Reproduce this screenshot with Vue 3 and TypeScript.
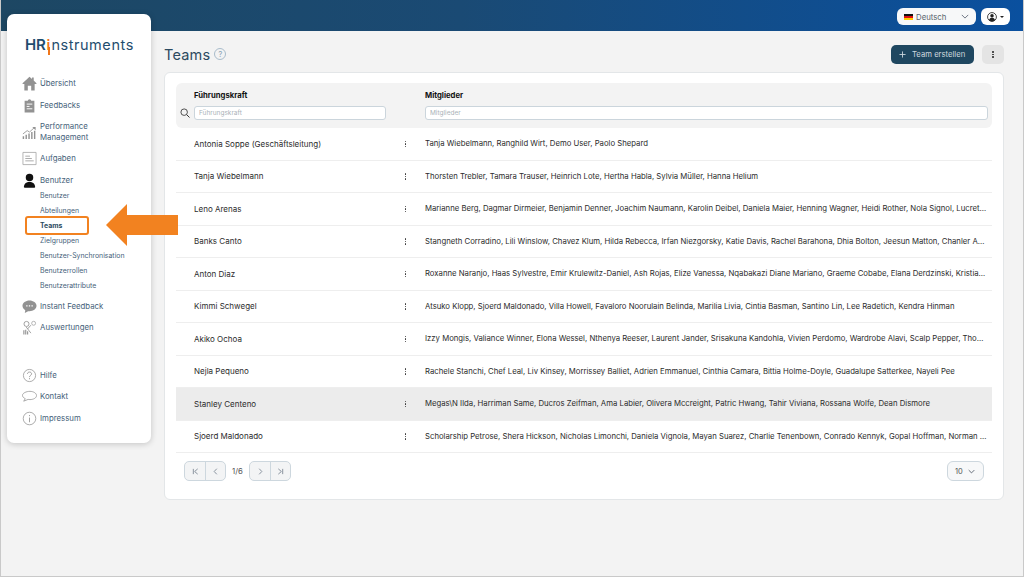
<template>
  <div class="page">
    <header class="topbar">
      <div class="lang">
        <span class="flag"></span>
        <span class="lang-name">Deutsch</span>
        <svg class="chev" viewBox="0 0 10 6" width="8" height="5"><path d="M1 1l4 4 4-4" fill="none" stroke="#6b7280" stroke-width="1.2" /></svg>
      </div>
      <div class="user">
        <svg viewBox="0 0 12 12" width="10" height="10">
          <circle cx="6" cy="6" r="5.3" fill="none" stroke="#222" stroke-width="1" />
          <circle cx="6" cy="4.6" r="2.1" fill="#222" />
          <path d="M2.4 9.6c.6-2 2-2.6 3.6-2.6s3 .6 3.6 2.6C8.6 10.8 7.4 11.3 6 11.3s-2.6-.5-3.6-1.7z" fill="#222" />
        </svg>
        <span class="caret"></span>
      </div>
    </header>

    <div class="body">
      <aside class="sidebar">
        <div class="logo"><b>HR</b><i>i</i><span>nstruments</span></div>
        <nav class="nav">
          <template v-for="item in nav" :key="item.label">
            <div class="nav-item" :class="{ tall: item.label.includes('\n'), gap: item.gap }">
              <svg class="nav-icon" viewBox="0 0 16 16" width="15" height="15">
                <path
                  v-for="(p, i) in icons[item.icon]"
                  :key="i"
                  :d="p.d"
                  :fill="p.fill ?? 'none'"
                  :stroke="p.stroke ?? 'none'"
                  :stroke-width="p.width ?? 1"
                />
              </svg>
              <span class="nav-label">{{ item.label }}</span>
            </div>
            <div v-if="item.children" class="subnav">
              <div v-for="c in item.children" :key="c" class="sub-item" :class="{ active: c === 'Teams' }">{{ c }}</div>
            </div>
          </template>
        </nav>
      </aside>

      <main class="main">
        <div class="title-row">
          <h1>Teams</h1>
          <span class="help">?</span>
          <button class="create">
            <svg class="plus" viewBox="0 0 8 8" width="7" height="7"><path d="M4 .5v7M.5 4h7" stroke="#cfd8df" stroke-width="1" /></svg>
            Team erstellen
          </button>
          <button class="more"><span class="dots"><em></em><em></em><em></em></span></button>
        </div>

        <section class="card">
          <div class="thead">
            <svg class="search" viewBox="0 0 12 12" width="10" height="10">
              <circle cx="5" cy="5" r="3.9" fill="none" stroke="#333" stroke-width="1" />
              <path d="M8 8l3.4 3.4" stroke="#333" stroke-width="1.2" />
            </svg>
            <div class="head-cell name-col">
              <label>Führungskraft</label>
              <input placeholder="Führungskraft" />
            </div>
            <div class="spacer"></div>
            <div class="head-cell">
              <label>Mitglieder</label>
              <input placeholder="Mitglieder" />
            </div>
          </div>

          <div v-for="row in rows" :key="row.name" class="row" :class="{ hover: row.name === 'Stanley Centeno' }">
            <div class="name">{{ row.name }}</div>
            <div class="row-dots"><span class="dots"><em></em><em></em><em></em></span></div>
            <div class="members">{{ row.members }}</div>
          </div>

          <div class="pager">
            <div class="btn-group">
              <button><svg viewBox="0 0 8 8" width="7" height="7"><path d="M1.5 1v6M6.5 1L3 4l3.5 3" fill="none" stroke="#7b8794" stroke-width="1" /></svg></button>
              <button><svg viewBox="0 0 8 8" width="7" height="7"><path d="M5.5 .8L2.500 4l3 3.200" fill="none" stroke="#7b8794" stroke-width="1" /></svg></button>
            </div>
            <span class="page-no">1/6</span>
            <div class="btn-group">
              <button><svg viewBox="0 0 8 8" width="7" height="7"><path d="M2.500 .8L5.500 4l-3 3.200" fill="none" stroke="#7b8794" stroke-width="1" /></svg></button>
              <button><svg viewBox="0 0 8 8" width="7" height="7"><path d="M6.500 1v6M1.500 1L5 4 1.500 7" fill="none" stroke="#7b8794" stroke-width="1" /></svg></button>
            </div>
            <div class="size">
              <span>10</span>
              <svg viewBox="0 0 10 6" width="7" height="5"><path d="M1 1l4 4 4-4" fill="none" stroke="#4b5563" stroke-width="1.2" /></svg>
            </div>
          </div>
        </section>
      </main>
    </div>

    <!-- Markierung über dem Menü -->
    <svg class="arrow" viewBox="0 0 72 42" width="72" height="42"><path d="M0 21L21 0v11h51v20H21v11z" fill="#f28220" /></svg>
  </div>
</template>

<script setup lang="ts">
type Shape = { d: string; fill?: string; stroke?: string; width?: number }
type NavItem = { label: string; icon: string; children?: string[]; gap?: boolean }

const grey = '#929292'

const icons: Record<string, Shape[]> = {
  home: [{ d: 'M8 .8L.6 7.600v.9h1.900V15.500h3.700v-5h3.600v5h3.700V8.500h1.900v-.9L12.500 4.800V1.500h-1.800v1.600z', fill: grey }],
  feedback: [
    { d: 'M2.800 3h3.400a1.800 1.800 0 0 1 3.600 0h3.400v12.500H2.800z', fill: grey },
    { d: 'M5 6.500h6M5 9h3M5 11.500h6', stroke: '#fff', width: 1 },
  ],
  chart: [
    { d: 'M1.500 15v-3M4.500 15v-4.500M7.500 15V9M10.500 15V7.500M13.500 15V6', stroke: grey, width: 1.500 },
    { d: 'M1 9.500L5.500 6l2.500 1.500L13.500 2.500', stroke: grey, width: 0.9 },
    { d: 'M11 2h3.500v3.500z', fill: grey },
  ],
  tasks: [
    { d: 'M1 1.500h14v13H1z', stroke: '#a8a8a8', width: 0.9 },
    { d: 'M3.500 5.500h5M3.500 8h7M3.500 10.500h9', stroke: '#a8a8a8', width: 1 },
  ],
  user: [
    { d: 'M8 .8a4 4 0 1 0 0 8 4 4 0 0 0 0-8z', fill: '#111' },
    { d: 'M2 15c0-3.500 2.500-5.500 6-5.500s6 2 6 5.500c0 .5-.5.800-1 .800H3c-.5 0-1-.3-1-.8z', fill: '#111' },
  ],
  chat: [
    { d: 'M8 1.500c4 0 7.500 2.500 7.500 5.800s-3.500 5.800-7.500 5.800l-1.500-.1L3 15l.5-3C1.600 10.900.5 9.200.5 7.300.5 4 4 1.500 8 1.500z', fill: grey },
    { d: 'M4.500 7.300h1.400M7.300 7.300h1.400M10.100 7.300h1.400', stroke: '#fff', width: 1.400 },
  ],
  report: [
    { d: 'M7.500 4.200a2.700 2.700 0 1 1-5.400 0 2.700 2.700 0 0 1 5.400 0zM4.500 7.500l5 6.500M9.500 5.500L6 9.500', stroke: grey, width: 0.9 },
    { d: 'M14.500 3.500a2.100 2.100 0 1 1-4.200 0 2.100 2.100 0 0 1 4.200 0z', stroke: grey, width: 0.7 },
    { d: 'M2 15.500v-4.500M4 15.500v-5M6 15.500v-3.500', stroke: grey, width: 1.200 },
  ],
  help: [
    { d: 'M8 1.500a6.500 6.500 0 1 0 0 13 6.500 6.500 0 0 0 0-13z', stroke: grey, width: 0.8 },
    { d: 'M5.800 6.300C5.900 5 6.800 4.300 8 4.300c1.300 0 2.200.8 2.200 1.900 0 1.700-2.200 1.700-2.200 3.500M8 10.800v1.200', stroke: grey, width: 0.9 },
  ],
  contact: [{ d: 'M8.500 2.500c3.500 0 7 1.900 7 4.500s-3.500 4.300-7 4.300c-.7 0-1.400-.1-2-.2L1.800 13l1.700-2.700C1.800 9.500.5 8.300.5 6.800c0-2.400 4-4.300 8-4.300z', stroke: grey, width: 0.8 }],
  info: [
    { d: 'M8 1.300a6.700 6.700 0 1 0 0 13.400A6.700 6.700 0 0 0 8 1.300z', stroke: grey, width: 0.8 },
    { d: 'M8 7v5M8 4.300v1.200', stroke: grey, width: 0.9 },
  ],
}

const nav: NavItem[] = [
  { label: 'Übersicht', icon: 'home' },
  { label: 'Feedbacks', icon: 'feedback' },
  { label: 'Performance\nManagement', icon: 'chart' },
  { label: 'Aufgaben', icon: 'tasks' },
  {
    label: 'Benutzer',
    icon: 'user',
    children: ['Benutzer', 'Abteilungen', 'Teams', 'Zielgruppen', 'Benutzer-Synchronisation', 'Benutzerrollen', 'Benutzerattribute'],
  },
  { label: 'Instant Feedback', icon: 'chat' },
  { label: 'Auswertungen', icon: 'report' },
  { label: 'Hilfe', icon: 'help', gap: true },
  { label: 'Kontakt', icon: 'contact' },
  { label: 'Impressum', icon: 'info' },
]

const rows = [
  { name: 'Antonia Soppe (Geschäftsleitung)', members: 'Tanja Wiebelmann, Ranghild Wirt, Demo User, Paolo Shepard' },
  { name: 'Tanja Wiebelmann', members: 'Thorsten Trebler, Tamara Trauser, Heinrich Lote, Hertha Habla, Sylvia Müller, Hanna Helium' },
  { name: 'Leno Arenas', members: 'Marianne Berg, Dagmar Dirmeier, Benjamin Denner, Joachim Naumann, Karolin Deibel, Daniela Maier, Henning Wagner, Heidi Rother, Nola Signol, Lucretia Moss, Anna Wolf' },
  { name: 'Banks Canto', members: 'Stangneth Corradino, Lili Winslow, Chavez Klum, Hilda Rebecca, Irfan Niezgorsky, Katie Davis, Rachel Barahona, Dhia Bolton, Jeesun Matton, Chanler Agius, Mona Lee' },
  { name: 'Anton Diaz', members: 'Roxanne Naranjo, Haas Sylvestre, Emir Krulewitz-Daniel, Ash Rojas, Elize Vanessa, Nqabakazi Diane Mariano, Graeme Cobabe, Elana Derdzinski, Kristian Holt, Noor Sami' },
  { name: 'Kimmi Schwegel', members: 'Atsuko Klopp, Sjoerd Maldonado, Villa Howell, Favaloro Noorulain Belinda, Marilia Livia, Cintia Basman, Santino Lin, Lee Radetich, Kendra Hinman' },
  { name: 'Akiko Ochoa', members: 'Izzy Mongis, Valiance Winner, Elona Wessel, Nthenya Reeser, Laurent Jander, Srisakuna Kandohla, Vivien Perdomo, Wardrobe Alavi, Scalp Pepper, Thomas Reid, Ona Bay' },
  { name: 'Nejla Pequeno', members: 'Rachele Stanchi, Chef Leal, Liv Kinsey, Morrissey Balliet, Adrien Emmanuel, Cinthia Camara, Bittia Holme-Doyle, Guadalupe Satterkee, Nayeli Pee' },
  { name: 'Stanley Centeno', members: 'Megas\\N Ilda, Harriman Same, Ducros Zeifman, Ama Labier, Olivera Mccreight, Patric Hwang, Tahir Viviana, Rossana Wolfe, Dean Dismore' },
  { name: 'Sjoerd Maldonado', members: 'Scholarship Petrose, Shera Hickson, Nicholas Limonchi, Daniela Vignola, Mayan Suarez, Charlie Tenenbown, Conrado Kennyk, Gopal Hoffman, Norman Ulrich, Ali Kent' },
]
</script>

<style>
html,
body {
  margin: 0;
  background: #f3f3f3;
}
</style>

<style scoped>
.page {
  position: relative;
  width: 1024px;
  height: 577px;
  box-sizing: border-box;
  overflow: hidden;
  background: #f3f3f3;
  border: 1px solid #c9c9c9;
  border-top: 0;
  font-family: Inter, "Open Sans", sans-serif;
  color: #333;
}

.topbar {
  height: 31px;
  margin: 0 -1px;
  padding: 8px 14px 0 0;
  box-sizing: border-box;
  display: flex;
  justify-content: flex-end;
  gap: 5px;
  background: linear-gradient(90deg, #1d4763 0%, #1a4a74 45%, #0a509f 100%);
}

.lang {
  width: 79px;
  height: 17px;
  padding: 0 5px 0 7px;
  box-sizing: border-box;
  display: flex;
  align-items: center;
  background: #f7f8f9;
  border-radius: 6px;
}

.flag {
  width: 9px;
  height: 6px;
  margin-right: 3px;
  background: linear-gradient(#111 33%, #d11 33% 66%, #fc0 66%);
}

.lang-name {
  flex: 1;
  font-size: 7.800px;
  color: #5b6670;
}

.chev {
  margin-right: 2px;
}

.user {
  width: 29px;
  height: 17px;
  display: flex;
  align-items: center;
  justify-content: center;
  gap: 3px;
  background: #fff;
  border-radius: 6px;
}

.caret {
  border: 2px solid transparent;
  border-top: 2.500px solid #222;
  border-bottom: 0;
}

.body {
  display: flex;
  align-items: flex-start;
  padding-left: 6px;
  gap: 13px;
}

.sidebar {
  width: 144px;
  height: 429px;
  margin-top: -17px;
  flex: none;
  box-sizing: border-box;
  padding-left: 15px;
  background: #fff;
  border-radius: 7px;
  box-shadow: 0 1px 6px rgba(0, 0, 0, 0.2);
}

.logo {
  height: 59px;
  padding: 21px 0 0 3px;
  box-sizing: border-box;
  font-size: 14.500px;
  line-height: 20px;
  color: #1f4d6e;
  white-space: nowrap;
}

.logo b {
  font-weight: 600;
  font-size: 15px;
  letter-spacing: -0.2px;
}

.logo i {
  position: relative;
  margin: 0 1px;
  font-style: normal;
  color: #f0761a;
  font-weight: 600;
}

/* das i läuft im Logo unter die Grundlinie */
.logo i::after {
  content: "";
  position: absolute;
  left: 1.300px;
  top: 11px;
  width: 1.700px;
  height: 8px;
  background: #f0761a;
}

.logo span {
  letter-spacing: 0.55px;
}

.nav-item {
  display: flex;
  align-items: center;
  gap: 3px;
  height: 21.500px;
  font-size: 7.800px;
  line-height: 11px;
  color: #46627a;
}

.nav-item.tall {
  height: 32px;
}

.nav-item.gap {
  margin-top: 26px;
}

.nav-icon {
  flex: none;
}

.nav-label {
  white-space: pre-line;
}

.subnav {
  margin-top: -3px;
  padding: 0 0 2.500px 3px;
}

.sub-item {
  height: 15px;
  line-height: 15px;
  font-size: 6.900px;
  color: #46627a;
  padding-left: 15px;
  white-space: nowrap;
  position: relative;
}

.sub-item.active {
  font-weight: 700;
  color: #2a4a60;
}

.sub-item.active::after {
  content: "";
  position: absolute;
  left: 0;
  top: -2px;
  width: 64px;
  height: 19px;
  box-sizing: border-box;
  border: 2px solid #f28220;
  border-radius: 3px;
}

.main {
  width: 840px;
  flex: none;
}

.title-row {
  height: 41px;
  padding-top: 14px;
  box-sizing: border-box;
  display: flex;
  align-items: flex-start;
}

h1 {
  margin: 0 4px 0 0;
  font-size: 14.500px;
  line-height: 19px;
  font-weight: 400;
  color: #2c4a60;
  letter-spacing: 0.2px;
}

.help {
  width: 12px;
  height: 12px;
  margin-top: 3px;
  box-sizing: border-box;
  border: 1px solid #a9bccb;
  border-radius: 50%;
  font-size: 8px;
  line-height: 10px;
  text-align: center;
  color: #8da5b7;
}

.create {
  height: 19px;
  width: 83px;
  margin-left: auto;
  padding: 0 0 0 8px;
  display: flex;
  align-items: center;
  border: 0;
  border-radius: 5px;
  background: #1f4760;
  color: #cfd8df;
  font: 400 7.700px Inter, sans-serif;
}

.plus {
  margin-right: 6px;
}

.more {
  width: 22px;
  height: 19px;
  margin-left: 8px;
  padding: 0;
  border: 0;
  border-radius: 5px;
  background: #e4e4e4;
  display: flex;
  align-items: center;
  justify-content: center;
}

.dots {
  display: flex;
  flex-direction: column;
  gap: 1px;
}

.dots em {
  width: 1.500px;
  height: 1.500px;
  border-radius: 50%;
  background: #333;
}

.card {
  height: 428px;
  box-sizing: border-box;
  padding: 10px 11px 0;
  background: #fff;
  border: 1px solid #e3e6e8;
  border-radius: 6px;
}

.thead {
  position: relative;
  height: 45px;
  padding-left: 18px;
  padding-right: 4px;
  display: flex;
  background: #f3f3f3;
  border-radius: 6px;
}

.search {
  position: absolute;
  left: 4px;
  top: 25px;
}

.head-cell {
  flex: 1;
  padding-top: 8px;
  display: flex;
  flex-direction: column;
}

.head-cell.name-col {
  flex: none;
  width: 192px;
}

.spacer {
  width: 39px;
}

.head-cell label {
  font-size: 7.700px;
  line-height: 10px;
  font-weight: 700;
  color: #111;
  margin-bottom: 5px;
}

.head-cell input {
  height: 14px;
  box-sizing: border-box;
  width: 100%;
  padding: 0 4px;
  border: 1px solid #cbd5dc;
  border-radius: 3px;
  background: #fff;
  font: 6.500px Inter, sans-serif;
}

.head-cell input::placeholder {
  color: #aab2b8;
}

.row {
  height: 32.500px;
  box-sizing: border-box;
  padding: 0 4px 0 18px;
  display: grid;
  grid-template-columns: 200px 23px 1fr;
  align-items: center;
  border-bottom: 1px solid #eeeeee;
  font-size: 7.740px;
  color: #2b2b2b;
}

.row.hover {
  background: #ececec;
}

.name {
  font-size: 8px;
}

.row-dots {
  display: flex;
  justify-content: center;
}

.members {
  margin-left: 8px;
  white-space: nowrap;
  overflow: hidden;
  text-overflow: ellipsis;
}

.pager {
  padding: 8px 8px 0;
  display: flex;
  align-items: center;
}

.btn-group {
  display: flex;
  height: 20px;
  border: 1px solid #cdd7de;
  border-radius: 5px;
  box-sizing: border-box;
  overflow: hidden;
  background: #f3f4f5;
}

.btn-group button {
  width: 20px;
  padding: 0;
  border: 0;
  background: transparent;
  display: flex;
  align-items: center;
  justify-content: center;
}

.btn-group button + button {
  border-left: 1px solid #cdd7de;
}

.page-no {
  width: 23px;
  text-align: center;
  font-size: 7.800px;
  color: #555;
}

.size {
  width: 37px;
  height: 20px;
  margin-left: auto;
  padding: 0 8px 0 7px;
  box-sizing: border-box;
  display: flex;
  align-items: center;
  justify-content: space-between;
  border: 1px solid #cdd7de;
  border-radius: 6px;
  background: #f7f8f9;
  font-size: 7.500px;
  color: #555;
}

.arrow {
  position: absolute;
  left: 105px;
  top: 204px;
}
</style>
